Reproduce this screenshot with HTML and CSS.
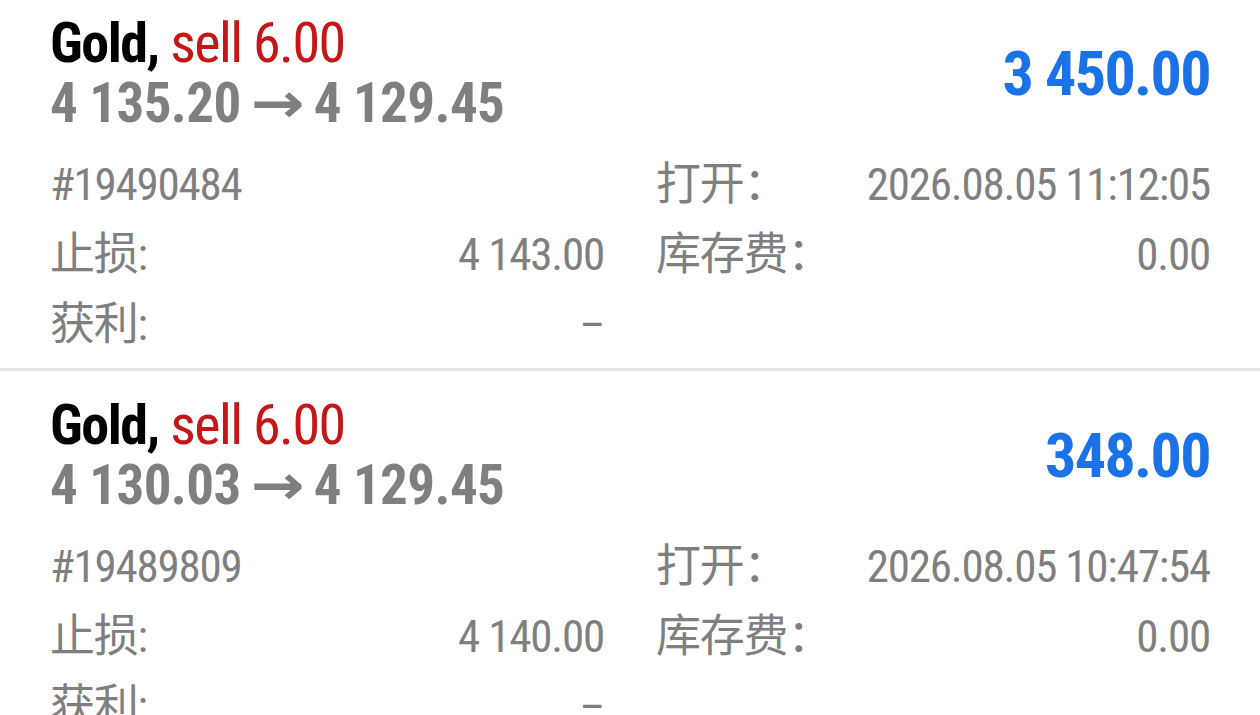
FILE: index.html
```html
<!DOCTYPE html>
<html>
<head>
  <title>Positions</title>
  <link rel="stylesheet" href="styles.css">
</head>
<body>
  <div class="list">
    <div class="card">
      <div class="head">
        <div class="head-left">
          <div class="title">Gold, <span class="sell">sell 6.00</span></div>
          <div class="prices">4 135.20 <span class="arrow">→</span> 4 129.45</div>
        </div>
        <div class="profit">3 450.00</div>
      </div>
      <div class="details">
        <div class="row"><span>#19490484</span><span></span></div>
        <div class="row"><span>打开：</span><span>2026.08.05 11:12:05</span></div>
        <div class="row"><span>止损:</span><span>4 143.00</span></div>
        <div class="row"><span>库存费：</span><span>0.00</span></div>
        <div class="row"><span>获利:</span><span>–</span></div>
        <div class="row"></div>
      </div>
    </div>
    <div class="card">
      <div class="head">
        <div class="head-left">
          <div class="title">Gold, <span class="sell">sell 6.00</span></div>
          <div class="prices">4 130.03 <span class="arrow">→</span> 4 129.45</div>
        </div>
        <div class="profit">348.00</div>
      </div>
      <div class="details">
        <div class="row"><span>#19489809</span><span></span></div>
        <div class="row"><span>打开：</span><span>2026.08.05 10:47:54</span></div>
        <div class="row"><span>止损:</span><span>4 140.00</span></div>
        <div class="row"><span>库存费：</span><span>0.00</span></div>
        <div class="row"><span>获利:</span><span>–</span></div>
        <div class="row"></div>
      </div>
    </div>
  </div>
</body>
</html>
```

FILE: styles.css
```css
body {
  margin: 0;
  background: #fff;
  font-family: "Roboto Condensed", "DejaVu Sans Condensed", Roboto, "Noto Sans CJK SC", sans-serif;
  font-stretch: condensed;
  overflow: hidden;
}
.card {
  padding: 24px 50px 8px 50px;
  border-bottom: 3px solid #e3e3e3;
}
.card:first-child {
  padding-top: 13px;
}
.head {
  display: flex;
  justify-content: space-between;
  align-items: center;
}
.title {
  font-size: 56px;
  line-height: 60px;
  font-weight: bold;
  letter-spacing: -1.5px;
  color: #000;
}
.sell {
  font-weight: normal;
  color: #c41717;
}
.prices {
  font-size: 55px;
  line-height: 60px;
  font-weight: bold;
  letter-spacing: -0.6px;
  color: #7f7f7f;
}
.arrow {
  display: inline-block;
  transform: scaleX(1.3);
  margin: 0 4px;
}
.profit {
  font-size: 62px;
  font-weight: bold;
  letter-spacing: -1.6px;
  color: #1a72e6;
}
.details {
  display: grid;
  grid-template-columns: 1fr 1fr;
  column-gap: 52px;
  margin-top: 17px;
}
.row {
  display: flex;
  justify-content: space-between;
  font-size: 45px;
  line-height: 70px;
  height: 70px;
  letter-spacing: -1.2px;
  color: #7f7f7f;
}
```
